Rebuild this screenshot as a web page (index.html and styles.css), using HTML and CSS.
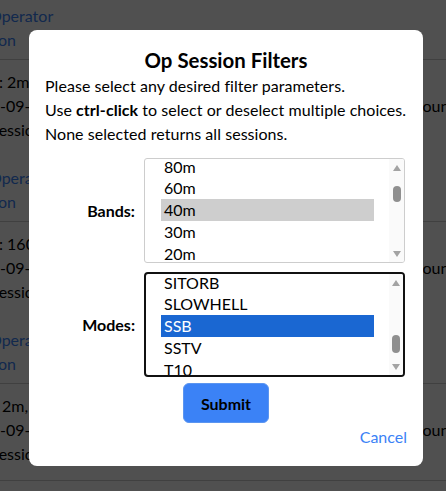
FILE: index.html
```html
<!DOCTYPE html>
<html lang="en">
<head>
<meta charset="utf-8">
<title>Op Sessions</title>
<link rel="stylesheet" href="styles.css">
</head>
<body>
<main class="page">
  <section class="card">
    <div class="card-main">
      <div class="ln ln-band">Bands: 20m, 40m</div>
      <div class="ln ln-date">2023-09-17 14:00 UTC</div>
      <div class="ln ln-sess">Sessions: 2</div>
      <div class="ln ln-gap"></div>
      <div class="ln ln-link ln-op">Operator</div>
      <div class="ln ln-link ln-act"><span>View Session</span></div>
    </div>
    <div class="card-side"><div class="ln"></div><div class="ln">Count: 12</div></div>
  </section>
  <section class="card">
    <div class="card-main">
      <div class="ln ln-band">Bands: 2m, 70cm</div>
      <div class="ln ln-date">2023-09-16 19:00 UTC</div>
      <div class="ln ln-sess">Sessions: 1</div>
      <div class="ln ln-gap"></div>
      <div class="ln ln-link ln-op">Operator</div>
      <div class="ln ln-link ln-act"><span>View Session</span></div>
    </div>
    <div class="card-side"><div class="ln"></div><div class="ln">Count: 8</div></div>
  </section>
  <section class="card">
    <div class="card-main">
      <div class="ln ln-band">Bands: 160m, 80m</div>
      <div class="ln ln-date">2023-09-15 02:30 UTC</div>
      <div class="ln ln-sess">Sessions: 3</div>
      <div class="ln ln-gap"></div>
      <div class="ln ln-link ln-op">Operator</div>
      <div class="ln ln-link ln-act"><span>View Session</span></div>
    </div>
    <div class="card-side"><div class="ln"></div><div class="ln">Count: 31</div></div>
  </section>
  <section class="card card-last">
    <div class="card-main">
      <div class="ln ln-band ln-band-alt">Bands: 2m, 6m</div>
      <div class="ln ln-date">2023-09-14 21:15 UTC</div>
      <div class="ln ln-sess">Sessions: 1</div>
    </div>
    <div class="card-side"><div class="ln"></div><div class="ln">Count: 5</div></div>
  </section>
</main>

<div class="overlay">
  <div class="modal" role="dialog" aria-labelledby="dlg-title">
    <h2 class="modal-title" id="dlg-title">Op Session Filters</h2>
    <p class="modal-text">Please select any desired filter parameters.</p>
    <p class="modal-text">Use <b>ctrl-click</b> to select or deselect multiple choices.</p>
    <p class="modal-text">None selected returns all sessions.</p>

    <div class="filter-grid">
      <label class="filter-label">Bands:</label>
      <div class="listbox">
        <div class="listbox-view">
          <ul class="options options-bands">
            <li class="opt">160m</li>
            <li class="opt">80m</li>
            <li class="opt">60m</li>
            <li class="opt opt-sel">40m</li>
            <li class="opt">30m</li>
            <li class="opt">20m</li>
            <li class="opt">17m</li>
          </ul>
        </div>
        <div class="sbar">
          <span class="sbar-up"></span>
          <span class="sbar-track"><span class="sbar-thumb thumb-bands"></span></span>
          <span class="sbar-down"></span>
        </div>
      </div>

      <label class="filter-label">Modes:</label>
      <div class="listbox listbox-focus">
        <div class="listbox-view">
          <ul class="options options-modes">
            <li class="opt">RTTY</li>
            <li class="opt">SITORB</li>
            <li class="opt">SLOWHELL</li>
            <li class="opt opt-active">SSB</li>
            <li class="opt">SSTV</li>
            <li class="opt">T10</li>
            <li class="opt">THOR</li>
          </ul>
        </div>
        <div class="sbar">
          <span class="sbar-up"></span>
          <span class="sbar-track"><span class="sbar-thumb thumb-modes"></span></span>
          <span class="sbar-down"></span>
        </div>
      </div>
    </div>

    <div class="actions">
      <button class="btn-submit" type="button">Submit</button>
    </div>
    <div class="cancel-row"><a class="cancel" href="#">Cancel</a></div>
  </div>
</div>
</body>
</html>
```
FILE: styles.css
```css
* { box-sizing: border-box; }
html, body {
  margin: 0;
  padding: 0;
  overflow: hidden;
  background: #ffffff;
  height: 100%;
}
body {
  font-family: Lato, "Open Sans", "Noto Sans", sans-serif;
  font-size: 16px;
  line-height: 24px;
  color: #000;
}

/* background list */
.page {
  margin-top: -102px;
}
.card {
  display: grid;
  grid-template-columns: 412px 1fr;
  padding: 10px 0 7px;
  border-bottom: 1px solid #cccccc;
  white-space: nowrap;
}
.card-main { min-width: 0; }
.card-last { padding-bottom: 14px; }
.ln { height: 24px; }
.ln-band { margin-left: -44px; }
.ln-band-alt { margin-left: -49px; }
.ln-date { margin-left: -37px; }
.ln-sess { margin-left: -10px; }
.ln-link { color: #3b82f6; }
.ln-op { margin-left: -11px; }
.ln-act { display: flex; justify-content: flex-end; width: 16px; }
.card-side { color: #000; }

/* overlay + modal */
.overlay {
  position: fixed;
  inset: 0;
  background: rgba(0, 0, 0, 0.686);
  padding: 30px 0 0 29px;
}
.modal {
  width: 394px;
  height: 436px;
  background: #fff;
  border-radius: 8px;
  padding: 16px;
  display: flex;
  flex-direction: column;
}
.modal-title {
  margin: 0;
  font-size: 20.4px;
  line-height: 28px;
  font-weight: 700;
  text-align: center;
}
.modal-text {
  margin: 0;
  font-size: 16px;
  line-height: 24px;
  letter-spacing: 0.05px;
}
.modal-text b { font-weight: 700; }

.filter-grid {
  margin-top: 12px;
  display: grid;
  grid-template-columns: 90px 261px;
  column-gap: 9px;
  row-gap: 9px;
  align-items: center;
}
.filter-label {
  font-weight: 700;
  text-align: right;
}

.listbox {
  height: 105px;
  border: 1px solid #cdcdcd;
  border-radius: 3px;
  display: flex;
  overflow: hidden;
  background: #fff;
}
.listbox-focus {
  border: 2px solid #111;
  border-radius: 4px;
}
.listbox-view {
  flex: 1;
  overflow: hidden;
  padding: 0 15px 0 16px;
}
.listbox-focus .listbox-view { padding-left: 15px; }
.options {
  list-style: none;
  margin: 0;
  padding: 0;
}
.options-bands { margin-top: -25.25px; }
.options-modes { margin-top: -24.25px; }
.opt {
  height: 21.75px;
  line-height: 21.75px;
  padding-left: 3px;
  color: #000;
}
.opt-sel { background: #cecece; }
.opt-active { background: #1a67d2; color: #fff; }

.sbar {
  width: 15px;
  background: #fafafa;
  display: flex;
  flex-direction: column;
  align-items: center;
}
.listbox-focus .sbar { width: 14px; }
.sbar-up, .sbar-down {
  flex: none;
  height: 17px;
  width: 100%;
  display: flex;
  align-items: center;
  justify-content: center;
}
.sbar-up::before {
  content: "";
  border-left: 4.5px solid transparent;
  border-right: 4.5px solid transparent;
  border-bottom: 6px solid #a3a3a3;
}
.sbar-down::before {
  content: "";
  border-left: 4.5px solid transparent;
  border-right: 4.5px solid transparent;
  border-top: 6px solid #a3a3a3;
}
.sbar-track {
  flex: 1;
  width: 100%;
  display: flex;
  justify-content: center;
}
.sbar-thumb {
  width: 8px;
  border-radius: 4px;
  background: #8f8f8f;
}
.thumb-bands { margin-top: 10px; height: 16px; }
.thumb-modes { margin-top: 44px; height: 18px; }

.actions {
  margin-top: 6px;
  display: flex;
  justify-content: center;
}
.btn-submit {
  width: 86px;
  height: 40px;
  border: 1px solid #5b95f0;
  border-radius: 6px;
  background: #3b82f6;
  color: #000;
  font-family: inherit;
  font-size: 16px;
  font-weight: 700;
  padding: 0;
  cursor: pointer;
}
.cancel-row {
  margin-top: 2px;
  text-align: right;
}
.cancel {
  color: #3b82f6;
  text-decoration: none;
}
```
